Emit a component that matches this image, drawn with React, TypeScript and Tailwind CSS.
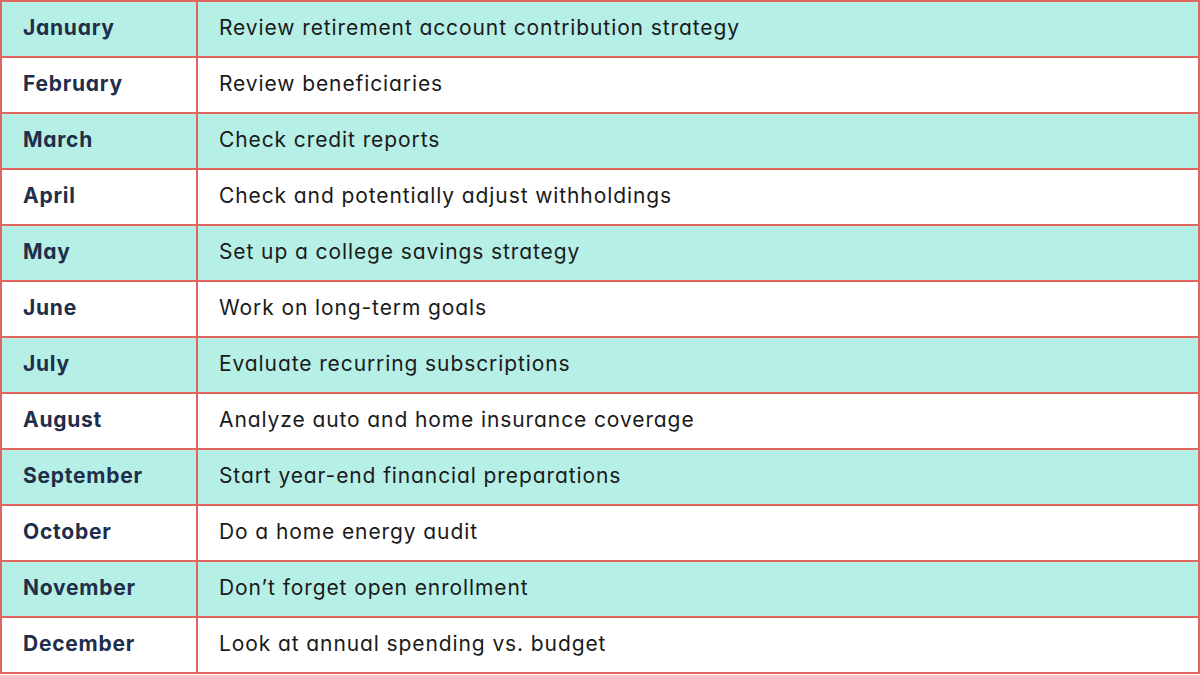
import React from "react";

const rows: [string, string][] = [
  ["January", "Review retirement account contribution strategy"],
  ["February", "Review beneficiaries"],
  ["March", "Check credit reports"],
  ["April", "Check and potentially adjust withholdings"],
  ["May", "Set up a college savings strategy"],
  ["June", "Work on long-term goals"],
  ["July", "Evaluate recurring subscriptions"],
  ["August", "Analyze auto and home insurance coverage"],
  ["September", "Start year-end financial preparations"],
  ["October", "Do a home energy audit"],
  ["November", "Don\u2019t forget open enrollment"],
  ["December", "Look at annual spending vs. budget"],
];

export default function App() {
  return (
    <div
      className="w-[1200px] h-[675px] bg-white overflow-hidden"
      style={{ fontFamily: "Inter, 'Noto Sans', sans-serif", fontFeatureSettings: '"cv11" 1' }}
    >
      <div className="w-[1200px] border-t-2 border-l-2 border-r-2 border-[#e0665e]">
        {rows.map(([m, t], i) => (
          <div
            key={m}
            className={`flex h-[56px] border-b-2 border-[#e0665e] ${i % 2 === 0 ? "bg-[#b6efe6]" : "bg-white"}`}
          >
            <div className="w-[196px] shrink-0 border-r-2 border-[#e0665e] flex items-center pl-[21px] pb-[3px] text-[21px] font-bold text-[#1f2e4a] tracking-[0.75px]">
              {m}
            </div>
            <div className="flex-1 flex items-center pl-[21px] pb-[3px] text-[21px] text-[#1a1a1a] tracking-[0.9px]">
              {t}
            </div>
          </div>
        ))}
      </div>
    </div>
  );
}
